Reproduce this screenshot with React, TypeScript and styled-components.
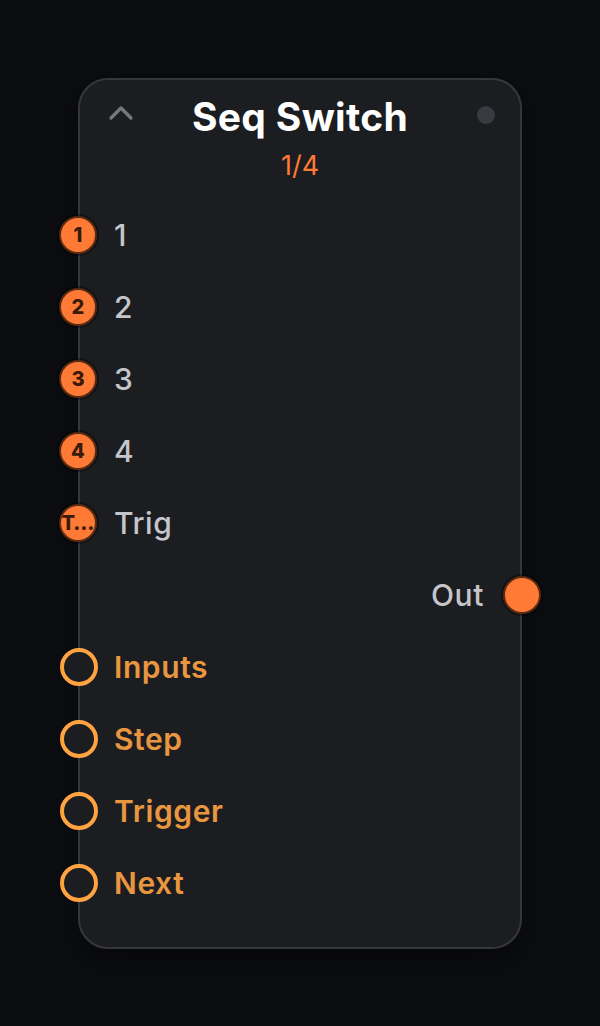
import React from "react";
import styled, { createGlobalStyle } from "styled-components";

const Global = createGlobalStyle`
  html, body { margin: 0; padding: 0; background: #0c0d10; }
  body { font-family: Inter, "Noto Sans", sans-serif; }
`;

const Page = styled.div`
  min-height: 1026px;
  display: flex;
  align-items: center;
  justify-content: center;
`;

const Card = styled.div`
  position: relative;
  width: 444px;
  height: 871px;
  box-sizing: border-box;
  background: #1c1d21;
  border: 2px solid #36373c;
  border-radius: 30px;
  box-shadow: 0 10px 30px rgba(0, 0, 0, 0.5);
  display: flex;
  flex-direction: column;
  padding-top: 14px;
`;

const Header = styled.div`
  position: relative;
  display: flex;
  flex-direction: column;
  align-items: center;
  padding-bottom: 17px;
`;

const Title = styled.div`
  font-size: 39px;
  line-height: 46px;
  font-weight: 700;
  color: #ffffff;
  letter-spacing: 0.3px;
`;

const Subtitle = styled.div`
  font-size: 27px;
  line-height: 32px;
  color: #ff7a35;
  margin-top: 10px;
`;

const Collapse = styled.svg`
  position: absolute;
  left: 27px;
  top: 8px;
`;

const StatusDot = styled.div`
  position: absolute;
  right: 25px;
  top: 12px;
  width: 18px;
  height: 18px;
  border-radius: 50%;
  background: #3a3b40;
`;

const Row = styled.div<{ $right?: boolean }>`
  position: relative;
  height: 72px;
  display: flex;
  align-items: center;
  justify-content: ${(p) => (p.$right ? "flex-end" : "flex-start")};
  padding: 0 36px 0 34px;
`;

const Label = styled.span<{ $param?: boolean }>`
  font-size: 30px;
  letter-spacing: 0.6px;
  font-weight: ${(p) => (p.$param ? 600 : 500)};
  color: ${(p) => (p.$param ? "#e8963f" : "#c5c6cb")};
`;

const Port = styled.div<{ $side: "left" | "right" }>`
  position: absolute;
  top: 50%;
  ${(p) => (p.$side === "left" ? "left: -21px;" : "right: -21px;")}
  transform: translateY(-50%);
  width: 38px;
  height: 38px;
  box-sizing: border-box;
  border-radius: 50%;
  background: #ff7a35;
  border: 2px solid #5a2a12;
  box-shadow: 0 0 0 2px rgba(0, 0, 0, 0.35);
  display: flex;
  align-items: center;
  justify-content: center;
  font-size: 20px;
  font-weight: 800;
  color: #3a1a0a;
  overflow: hidden;
  white-space: nowrap;
`;

const ParamPort = styled.div`
  position: absolute;
  top: 50%;
  left: -20px;
  transform: translateY(-50%);
  width: 38px;
  height: 38px;
  box-sizing: border-box;
  border-radius: 50%;
  border: 4px solid #ffa340;
  background: #1c1d21;
`;

const inputs = [
  { badge: "1", label: "1" },
  { badge: "2", label: "2" },
  { badge: "3", label: "3" },
  { badge: "4", label: "4" },
  { badge: "T…", label: "Trig" },
];

const params = ["Inputs", "Step", "Trigger", "Next"];

export default function App() {
  return (
    <>
      <Global />
      <Page>
        <Card>
          <Header>
            <Collapse width="28" height="20" viewBox="0 0 28 20">
              <path d="M4 16 L14 6 L24 16" fill="none" stroke="#77787d" strokeWidth="3.2" strokeLinecap="round" strokeLinejoin="round" />
            </Collapse>
            <Title>Seq Switch</Title>
            <Subtitle>1/4</Subtitle>
            <StatusDot />
          </Header>
          {inputs.map((i) => (
            <Row key={i.label}>
              <Port $side="left">{i.badge}</Port>
              <Label>{i.label}</Label>
            </Row>
          ))}
          <Row $right>
            <Label>Out</Label>
            <Port $side="right" />
          </Row>
          {params.map((p) => (
            <Row key={p}>
              <ParamPort />
              <Label $param>{p}</Label>
            </Row>
          ))}
        </Card>
      </Page>
    </>
  );
}
